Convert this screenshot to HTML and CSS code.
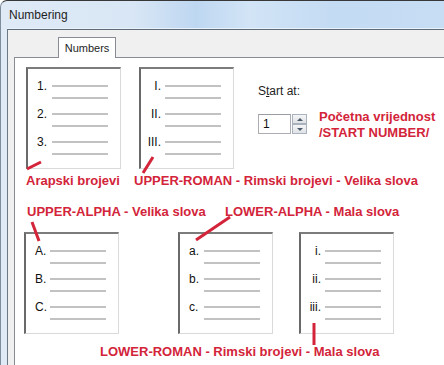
FILE: index.html
```html
<!DOCTYPE html>
<html lang="hr">
<head>
  <meta charset="UTF-8">
  <title>Numbering</title>
  <link rel="stylesheet" href="styles.css">
</head>
<body>

  <div class="window">
    <div class="titlebar">Numbering</div>

    <div class="client">
      <div class="tabs">
        <div class="tab">Numbers</div>
      </div>

      <div class="panel">
        <div class="row1">
          <div class="sample">
            <div class="item"><span class="num left">1.</span><span class="lines"><i></i><i></i></span></div>
            <div class="item"><span class="num left">2.</span><span class="lines"><i></i><i></i></span></div>
            <div class="item"><span class="num left">3.</span><span class="lines"><i></i><i></i></span></div>
          </div>
          <div class="sample">
            <div class="item"><span class="num">I.</span><span class="lines"><i></i><i></i></span></div>
            <div class="item"><span class="num">II.</span><span class="lines"><i></i><i></i></span></div>
            <div class="item"><span class="num">III.</span><span class="lines"><i></i><i></i></span></div>
          </div>

          <div class="start">
            <div class="start-label">S<u>t</u>art at:</div>
            <div class="spin-row">
              <div class="spin-input">1</div>
              <div class="spin-buttons">
                <div class="spin-btn up"></div>
                <div class="spin-btn down"></div>
              </div>
              <div class="note">Početna vrijednost<br>/START NUMBER/</div>
            </div>
          </div>
        </div>

        <div class="labels labels1">
          <span class="note first">Arapski brojevi</span>
          <span class="note">UPPER-ROMAN - Rimski brojevi - Velika slova</span>
        </div>

        <div class="labels labels2">
          <span class="note first">UPPER-ALPHA - Velika slova</span>
          <span class="note">LOWER-ALPHA - Mala slova</span>
        </div>

        <div class="row2">
          <div class="sample">
            <div class="item"><span class="num left">A.</span><span class="lines"><i></i><i></i></span></div>
            <div class="item"><span class="num left">B.</span><span class="lines"><i></i><i></i></span></div>
            <div class="item"><span class="num left">C.</span><span class="lines"><i></i><i></i></span></div>
          </div>
          <div class="sample">
            <div class="item"><span class="num left">a.</span><span class="lines"><i></i><i></i></span></div>
            <div class="item"><span class="num left">b.</span><span class="lines"><i></i><i></i></span></div>
            <div class="item"><span class="num left">c.</span><span class="lines"><i></i><i></i></span></div>
          </div>
          <div class="sample">
            <div class="item"><span class="num">i.</span><span class="lines"><i></i><i></i></span></div>
            <div class="item"><span class="num">ii.</span><span class="lines"><i></i><i></i></span></div>
            <div class="item"><span class="num">iii.</span><span class="lines"><i></i><i></i></span></div>
          </div>
        </div>

        <div class="labels labels3">
          <span class="note">LOWER-ROMAN - Rimski brojevi - Mala slova</span>
        </div>
      </div>
    </div>
  </div>

  <!-- red pointer marks drawn over the dialog -->
  <svg class="marks" width="444" height="365" viewBox="0 0 444 365">
    <g stroke="#d3243a" stroke-width="3" stroke-linecap="butt">
      <line x1="27" y1="169" x2="41" y2="162" />
      <line x1="143" y1="173" x2="153" y2="157" />
      <line x1="32" y1="222" x2="39" y2="241" />
      <line x1="230" y1="217" x2="196" y2="240" />
      <line x1="314" y1="323" x2="314" y2="345" />
    </g>
  </svg>

</body>
</html>
```

FILE: styles.css
```css
body {
  margin: 0;
  width: 444px;
  height: 365px;
  overflow: hidden;
  font-family: "Liberation Sans", Arial, sans-serif;
  background: #ffffff;
}

.window {
  height: 365px;
  padding-left: 6px;
  border-top: 1px solid #383838;
  border-left: 1px solid #7f8c9b;
  border-top-left-radius: 7px;
  background: linear-gradient(90deg, #dfeaf6 0, #d8e6f5 30%, #bed7f1 44%, #d2e4f6 56%, #c3dbf3 75%, #c6ddf4 100%);
  overflow: hidden;
}

.titlebar {
  height: 27px;
  padding-left: 2px;
  border-bottom: 1px solid #e9f1fa;
  font-size: 12px;
  line-height: 28px;
  color: #1e1e1e;
}

.client {
  height: 400px;
  padding-top: 7px;
  border-top: 1px solid #5f6b78;
  border-left: 1px solid #6d7785;
  background: #f0f0f0;
}

.tabs {
  display: flex;
  margin-left: 6px;
  position: relative;
  z-index: 1;
}

.tab {
  width: 56px;
  height: 20px;
  margin-left: 44px;
  margin-bottom: -1px;
  border: 1px solid #898c95;
  border-bottom: none;
  background: #ffffff;
  font-size: 11px;
  line-height: 20px;
  text-align: center;
  color: #1e1e1e;
}

.panel {
  margin-left: 6px;
  height: 320px;
  padding: 9px 0 0 9px;
  border-top: 1px solid #898c95;
  border-left: 1px solid #898c95;
  background: #ffffff;
}

/* preview boxes */

.row1 {
  display: flex;
  gap: 18px;
  margin-left: 2px;
}

.row2 {
  display: flex;
  margin-top: 13px;
}

.row2 .sample:nth-child(2) {
  margin-left: 59px;
}

.row2 .sample:nth-child(3) {
  margin-left: 26px;
}

.sample {
  box-sizing: border-box;
  width: 95px;
  height: 102px;
  padding-top: 11px;
  border-style: solid;
  border-width: 2px 1px 1px 2px;
  border-color: #7c7c7c #dadada #dadada #6a6a6a;
  background: #ffffff;
  flex: none;
}

.item {
  display: flex;
  height: 28px;
}

.num {
  width: 20px;
  font-size: 12px;
  line-height: 12px;
  text-align: right;
  color: #111111;
}

.num.left {
  box-sizing: border-box;
  padding-left: 9px;
  text-align: left;
}

.lines {
  display: flex;
  flex-direction: column;
  gap: 10px;
  width: 56px;
  margin-left: 4px;
  padding-top: 5px;
}

.lines i {
  display: block;
  height: 2px;
  background: #c2c2c2;
}

/* start at */

.start {
  margin-left: 6px;
  padding-top: 17px;
}

.start-label {
  font-size: 12px;
  line-height: 14px;
  color: #1e1e1e;
}

.spin-row {
  display: flex;
  align-items: flex-start;
  margin-top: 16px;
}

.spin-input {
  box-sizing: border-box;
  width: 33px;
  height: 20px;
  padding-left: 4px;
  border: 1px solid #abadb3;
  border-top-color: #9a9ca3;
  font-size: 12px;
  line-height: 18px;
  color: #111111;
}

.spin-buttons {
  display: flex;
  flex-direction: column;
  margin-left: 1px;
}

.spin-btn {
  box-sizing: border-box;
  width: 15px;
  height: 10px;
  border: 1px solid #a9b2bd;
  background: linear-gradient(#f4f5f7, #dfe2e6);
  display: flex;
  align-items: center;
  justify-content: center;
}

.spin-btn.up::after {
  content: "";
  border-left: 3px solid transparent;
  border-right: 3px solid transparent;
  border-bottom: 3px solid #4d5a6a;
}

.spin-btn.down::after {
  content: "";
  border-left: 3px solid transparent;
  border-right: 3px solid transparent;
  border-top: 3px solid #4d5a6a;
}

.spin-row .note {
  margin-left: 12px;
  margin-top: -5px;
  line-height: 16px;
}

/* red notes */

.note {
  font-size: 13px;
  font-weight: bold;
  color: #d3243a;
  white-space: nowrap;
}

.labels {
  display: flex;
  line-height: 15px;
}

.labels1 {
  margin-top: 4px;
  margin-left: 2px;
}

.labels1 .first {
  width: 108px;
}

.labels2 {
  margin-top: 16px;
  margin-left: 3px;
}

.labels2 .first {
  width: 198px;
}

.labels3 {
  margin-top: 10px;
  margin-left: 76px;
}

.marks {
  position: absolute;
  left: 0;
  top: 0;
  pointer-events: none;
}
```
